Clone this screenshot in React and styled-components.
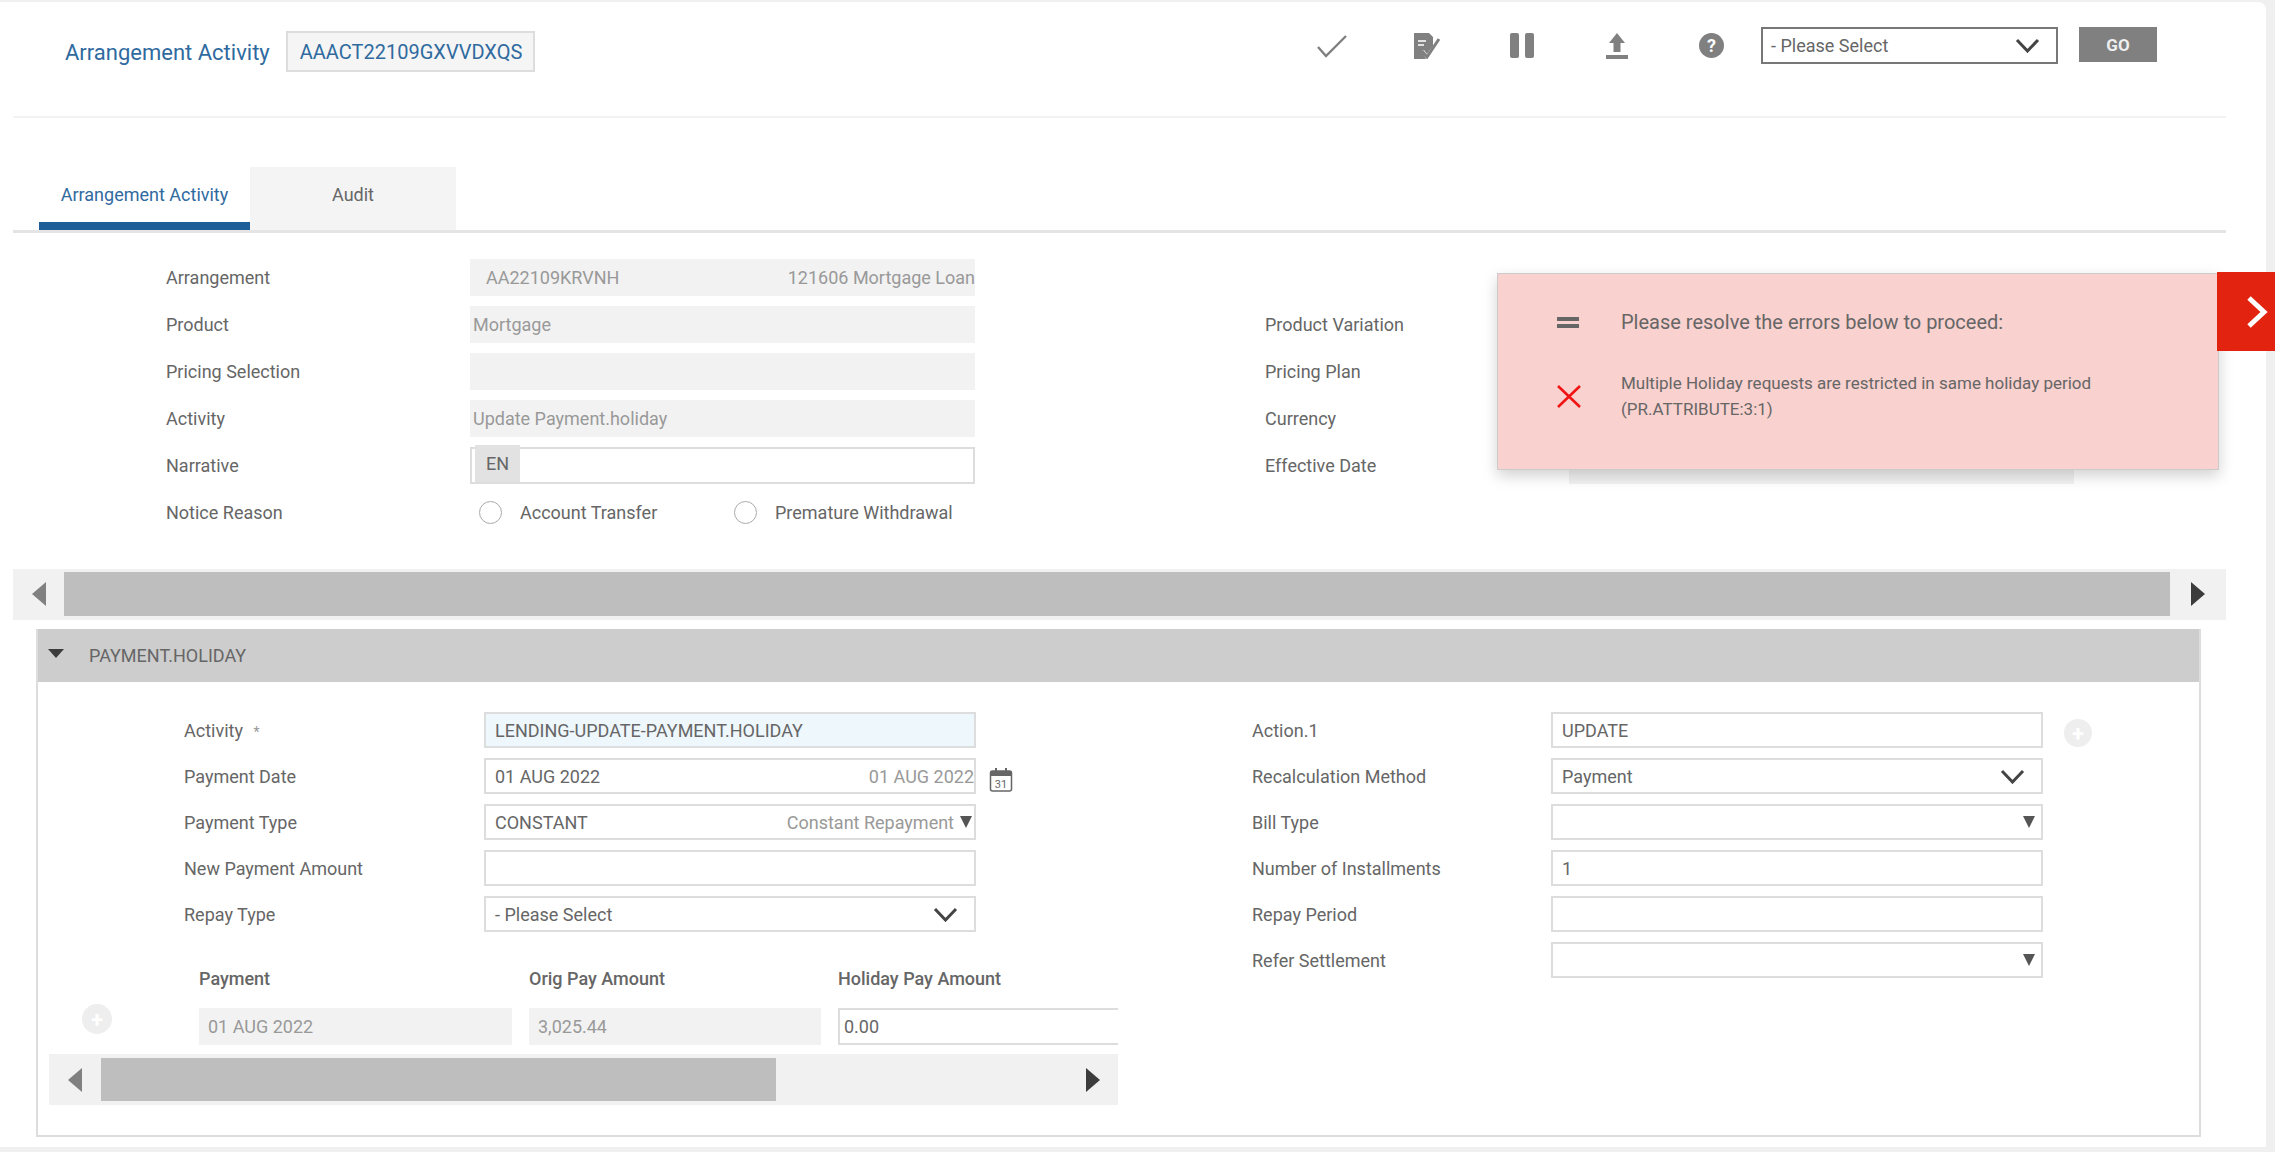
import React from "react"
import styled, { createGlobalStyle } from "styled-components"

const GlobalStyle = createGlobalStyle`
  html, body {
    margin: 0;
    padding: 0;
    background: #f0f0f0;
  }
  * {
    box-sizing: border-box;
  }
`

const Chevron = ({ size = 25 }) => (
  <svg width={size} height={size * 0.6} viewBox="0 0 25 15" fill="none">
    <polyline points="2,2 12.5,13 23,2" stroke="#444" strokeWidth="3" />
  </svg>
)

const App = () => {
  return (
    <Page>
      <GlobalStyle />
      <Panel>
        <Header>
          <Title>Arrangement Activity</Title>
          <IdPill>AAACT22109GXVVDXQS</IdPill>
          <Toolbar>
            <IconCell>
              <svg width="32" height="24" viewBox="0 0 32 24" fill="none">
                <polyline points="2,13 10,22 30,2" stroke="#808080" strokeWidth="2.4" />
              </svg>
            </IconCell>
            <IconCell>
              <svg width="28" height="27" viewBox="0 0 28 27" fill="none">
                <path d="M1 1h15l4 4v9l-6 8-3-4-2 1 4 8H1z" fill="#808080" />
                <path d="M5 9h8M5 13h6" stroke="#fff" strokeWidth="1.6" />
                <polyline points="9,19 14,25 26,7" stroke="#808080" strokeWidth="3" />
              </svg>
            </IconCell>
            <IconCell>
              <PauseBar />
              <PauseBar />
            </IconCell>
            <IconCell>
              <svg width="22" height="26" viewBox="0 0 22 26" fill="none">
                <path d="M11 0l8 10h-4.500v9h-7v-9H3z" fill="#808080" />
                <rect x="0" y="22" width="22" height="4" fill="#808080" />
              </svg>
            </IconCell>
            <IconCell>
              <HelpCircle>?</HelpCircle>
            </IconCell>
            <TopSelect>
              <span>- Please Select</span>
              <Chevron />
            </TopSelect>
            <GoButton>GO</GoButton>
          </Toolbar>
        </Header>

        <Tabs>
          <Tab $active>Arrangement Activity</Tab>
          <Tab>Audit</Tab>
        </Tabs>

        <Summary>
          <Column>
            <Row>
              <Label>Arrangement</Label>
              <ReadOnly $between $inset>
                <span>AA22109KRVNH</span>
                <span>121606 Mortgage Loan</span>
              </ReadOnly>
            </Row>
            <Row>
              <Label>Product</Label>
              <ReadOnly>Mortgage</ReadOnly>
            </Row>
            <Row>
              <Label>Pricing Selection</Label>
              <ReadOnly />
            </Row>
            <Row>
              <Label>Activity</Label>
              <ReadOnly>Update Payment.holiday</ReadOnly>
            </Row>
            <Row>
              <Label>Narrative</Label>
              <NarrativeBox>
                <LangTag>EN</LangTag>
              </NarrativeBox>
            </Row>
            <Row>
              <Label>Notice Reason</Label>
              <RadioGroup>
                <Radio />
                <RadioText $width="214px">Account Transfer</RadioText>
                <Radio />
                <RadioText>Premature Withdrawal</RadioText>
              </RadioGroup>
            </Row>
          </Column>
          <RightColumn>
            <Row>
              <Label>Product Variation</Label>
              <ReadOnly />
            </Row>
            <Row>
              <Label>Pricing Plan</Label>
              <ReadOnly />
            </Row>
            <Row>
              <Label>Currency</Label>
              <ReadOnly />
            </Row>
            <Row>
              <Label>Effective Date</Label>
              <ReadOnly />
            </Row>
          </RightColumn>
        </Summary>

        <ScrollTrack>
          <ScrollButton $width="51px">
            <ArrowLeft />
          </ScrollButton>
          <ScrollThumb $fill />
          <ScrollButton $width="56px">
            <ArrowRight />
          </ScrollButton>
        </ScrollTrack>

        <Section>
          <SectionHeader>
            <Caret />
            PAYMENT.HOLIDAY
          </SectionHeader>
          <SectionBody>
            <FormLeft>
              <FieldRow>
                <FieldLabel>
                  Activity <Required>*</Required>
                </FieldLabel>
                <Field $focus>LENDING-UPDATE-PAYMENT.HOLIDAY</Field>
              </FieldRow>
              <FieldRow>
                <FieldLabel>Payment Date</FieldLabel>
                <Field>
                  <span>01 AUG 2022</span>
                  <Hint>01 AUG 2022</Hint>
                </Field>
                <CalendarSlot>
                  <svg width="24" height="25" viewBox="0 0 24 25" fill="none">
                    <rect x="1.500" y="4" width="21" height="20" rx="2" stroke="#666" strokeWidth="1.5" />
                    <rect x="1.500" y="4" width="21" height="5" fill="#666" />
                    <path d="M7 1v5M17 1v5" stroke="#666" strokeWidth="2" />
                    <text x="12" y="21" fontSize="11" textAnchor="middle" fill="#666" fontFamily="Roboto, sans-serif">31</text>
                  </svg>
                </CalendarSlot>
              </FieldRow>
              <FieldRow>
                <FieldLabel>Payment Type</FieldLabel>
                <Field>
                  <span>CONSTANT</span>
                  <Hint>
                    Constant Repayment <SmallCaret />
                  </Hint>
                </Field>
              </FieldRow>
              <FieldRow>
                <FieldLabel>New Payment Amount</FieldLabel>
                <Field />
              </FieldRow>
              <FieldRow>
                <FieldLabel>Repay Type</FieldLabel>
                <Field>
                  <span>- Please Select</span>
                  <Chevron />
                </Field>
              </FieldRow>

              <SubTable>
                <SubHeader />
                <SubHeader>Payment</SubHeader>
                <SubHeader>Orig Pay Amount</SubHeader>
                <SubHeader>Holiday Pay Amount</SubHeader>
                <AddSlot>
                  <AddButton>+</AddButton>
                </AddSlot>
                <SubCell>01 AUG 2022</SubCell>
                <SubCell>3,025.44</SubCell>
                <SubInput>0.00</SubInput>
              </SubTable>
              <SubScroll>
                <ScrollButton $width="52px">
                  <ArrowLeft />
                </ScrollButton>
                <ScrollThumb $width="675px" />
                <ScrollButton $end>
                  <ArrowRight />
                </ScrollButton>
              </SubScroll>
            </FormLeft>

            <FormRight>
              <FieldRow>
                <RightLabel>Action.1</RightLabel>
                <Field>UPDATE</Field>
                <InlineAdd>+</InlineAdd>
              </FieldRow>
              <FieldRow>
                <RightLabel>Recalculation Method</RightLabel>
                <Field>
                  <span>Payment</span>
                  <Chevron />
                </Field>
              </FieldRow>
              <FieldRow>
                <RightLabel>Bill Type</RightLabel>
                <Field $end>
                  <SmallCaret />
                </Field>
              </FieldRow>
              <FieldRow>
                <RightLabel>Number of Installments</RightLabel>
                <Field>1</Field>
              </FieldRow>
              <FieldRow>
                <RightLabel>Repay Period</RightLabel>
                <Field />
              </FieldRow>
              <FieldRow>
                <RightLabel>Refer Settlement</RightLabel>
                <Field $end>
                  <SmallCaret />
                </Field>
              </FieldRow>
            </FormRight>
          </SectionBody>
        </Section>
      </Panel>

      <ErrorPanel>
        <ErrorRow>
          <ErrorIcon>
            <svg width="22" height="11" viewBox="0 0 22 11">
              <rect width="22" height="4" fill="#666" />
              <rect y="7" width="22" height="4" fill="#666" />
            </svg>
          </ErrorIcon>
          <ErrorTitle>Please resolve the errors below to proceed:</ErrorTitle>
        </ErrorRow>
        <ErrorRow>
          <ErrorIcon>
            <svg width="24" height="23" viewBox="0 0 24 23" fill="none">
              <path d="M1 1l22 21M23 1L1 22" stroke="#f01414" strokeWidth="2.600" />
            </svg>
          </ErrorIcon>
          <ErrorText>
            Multiple Holiday requests are restricted in same holiday period
            <br />
            (PR.ATTRIBUTE:3:1)
          </ErrorText>
        </ErrorRow>
      </ErrorPanel>
      <ErrorToggle>
        <svg width="22" height="32" viewBox="0 0 22 32" fill="none">
          <polyline points="3,2 18,16 3,30" stroke="#fff" strokeWidth="5" />
        </svg>
      </ErrorToggle>
    </Page>
  )
}

export default App

const Page = styled.div`
  position: relative;
  width: 2275px;
  height: 1152px;
  overflow: hidden;
  padding: 2px 9px 5px 0;
  background: #f0f0f0;
  font-family: Roboto, "Liberation Sans", sans-serif;
  font-size: 18px;
  color: #666;
`

const Panel = styled.div`
  height: 100%;
  padding: 0 40px 0 13px;
  background: #fff;
  border-top-right-radius: 8px;
`

const Header = styled.div`
  display: flex;
  align-items: flex-start;
  height: 116px;
  padding: 29px 69px 0 52px;
  border-bottom: 2px solid #f3f3f3;
`

const Title = styled.div`
  margin-top: 9px;
  font-size: 22px;
  color: #2f6a9f;
`

const IdPill = styled.div`
  margin-left: 16px;
  padding: 7px 12px 0;
  width: 249px;
  height: 41px;
  font-size: 20px;
  white-space: nowrap;
  color: #2f6a9f;
  background: #f5f5f5;
  border: 2px solid #ddd;
`

const Toolbar = styled.div`
  display: flex;
  align-items: center;
  margin: -4px 0 0 auto;
`

const IconCell = styled.div`
  display: flex;
  align-items: center;
  justify-content: center;
  gap: 6px;
  width: 95px;
  height: 37px;
`

const PauseBar = styled.span`
  width: 9px;
  height: 25px;
  border-radius: 2px;
  background: #808080;
`

const HelpCircle = styled.span`
  display: flex;
  align-items: center;
  justify-content: center;
  width: 25px;
  height: 25px;
  border-radius: 50%;
  font-size: 18px;
  font-weight: 700;
  color: #fff;
  background: #808080;
`

const TopSelect = styled.div`
  display: flex;
  align-items: center;
  justify-content: space-between;
  width: 297px;
  height: 37px;
  margin-left: 2px;
  padding: 0 16px 0 8px;
  font-size: 18px;
  border: 2px solid #777;
`

const GoButton = styled.div`
  display: flex;
  align-items: center;
  justify-content: center;
  width: 78px;
  height: 35px;
  margin: 0 0 2px 21px;
  font-size: 17px;
  font-weight: 700;
  color: #eee;
  background: #808080;
`

const Tabs = styled.div`
  display: flex;
  height: 67px;
  margin-top: 49px;
  padding-left: 26px;
  border-bottom: 3px solid #e4e4e4;
  height: 66px;
`

const Tab = styled.div`
  display: flex;
  align-items: center;
  justify-content: center;
  width: ${(p) => (p.$active ? "211px" : "206px")};
  padding-bottom: ${(p) => (p.$active ? "0" : "8px")};
  font-size: 18px;
  color: ${(p) => (p.$active ? "#2f6a9f" : "#666")};
  background: ${(p) => (p.$active ? "#fff" : "#f4f4f4")};
  border-bottom: ${(p) => (p.$active ? "8px solid #1f5f99" : "none")};
`

const Summary = styled.div`
  display: grid;
  grid-template-columns: 1086px 1fr;
  padding: 26px 0 38px 153px;
`

const Column = styled.div`
  display: flex;
  flex-direction: column;
  gap: 10px;
`

const RightColumn = styled(Column)`
  padding-top: 47px;
  padding-left: 153px;
  margin-left: -140px;
`

const Row = styled.div`
  display: flex;
  align-items: center;
  height: 37px;
`

const Label = styled.div`
  flex: 0 0 304px;
  white-space: nowrap;
`

const ReadOnly = styled.div`
  display: flex;
  align-items: center;
  justify-content: ${(p) => (p.$between ? "space-between" : "flex-start")};
  width: 505px;
  height: 37px;
  padding: 0 ${(p) => (p.$inset ? "0 0 16px" : "0 0 3px")};
  white-space: nowrap;
  color: #999;
  background: #f2f2f2;
`

const NarrativeBox = styled.div`
  display: flex;
  width: 505px;
  height: 37px;
  padding-left: 3px;
  background: #fff;
  border: 2px solid #ddd;
`

const LangTag = styled.div`
  display: flex;
  align-items: center;
  justify-content: center;
  width: 45px;
  height: 37px;
  margin-top: -4px;
  background: #e2e2e2;
`

const RadioGroup = styled.div`
  display: flex;
  align-items: center;
  padding-left: 9px;
  white-space: nowrap;
`

const Radio = styled.span`
  flex: none;
  width: 23px;
  height: 23px;
  border-radius: 50%;
  background: #fff;
  border: 1.5px solid #aaa;
`

const RadioText = styled.span`
  width: ${(p) => p.$width || "auto"};
  margin-left: 18px;
`

const ScrollTrack = styled.div`
  display: flex;
  align-items: stretch;
  height: 51px;
  padding: 3px 0 4px;
  background: #f1f1f1;
`

const ScrollButton = styled.div`
  display: flex;
  align-items: center;
  justify-content: ${(p) => (p.$end ? "flex-end" : "center")};
  flex: ${(p) => (p.$width ? `0 0 ${p.$width}` : "1")};
  padding-right: ${(p) => (p.$end ? "18px" : "0")};
`

const ScrollThumb = styled.div`
  flex: ${(p) => (p.$fill ? "1" : `0 0 ${p.$width}`)};
  background: #bebebe;
`

const ArrowLeft = styled.span`
  border-style: solid;
  border-width: 12px 14px 12px 0;
  border-color: transparent #808080 transparent transparent;
`

const ArrowRight = styled.span`
  border-style: solid;
  border-width: 12px 0 12px 14px;
  border-color: transparent transparent transparent #3c3c3c;
`

const Section = styled.div`
  height: 508px;
  margin: 9px 25px 0 23px;
  background: #fff;
  border: 2px solid #ddd;
  border-top: none;
`

const SectionHeader = styled.div`
  display: flex;
  align-items: center;
  height: 53px;
  padding-left: 10px;
  color: #666;
  background: #cdcdcd;
`

const Caret = styled.span`
  margin-right: 25px;
  margin-top: -5px;
  border-style: solid;
  border-width: 9px 8px 0;
  border-color: #3c3c3c transparent transparent;
`

const SectionBody = styled.div`
  display: grid;
  grid-template-columns: 1214px 1fr;
  padding-top: 30px;
`

const FormLeft = styled.div`
  display: flex;
  flex-direction: column;
  gap: 10px;
  padding-left: 146px;
`

const FormRight = styled.div`
  display: flex;
  flex-direction: column;
  gap: 10px;
`

const FieldRow = styled.div`
  display: flex;
  align-items: center;
  height: 36px;
`

const FieldLabel = styled.div`
  flex: 0 0 300px;
  white-space: nowrap;
`

const RightLabel = styled(FieldLabel)`
  flex-basis: 299px;
`

const Required = styled.span`
  margin-left: 6px;
  font-size: 14px;
  color: #999;
`

const Field = styled.div`
  display: flex;
  align-items: center;
  justify-content: ${(p) => (p.$end ? "flex-end" : "space-between")};
  flex: 0 0 492px;
  height: 36px;
  padding: 0 ${(p) => (p.$end ? "4px" : "0")} 0 9px;
  padding-right: 4px;
  white-space: nowrap;
  background: ${(p) => (p.$focus ? "#eef7fb" : "#fff")};
  border: 2px solid #ddd;

  svg {
    margin-right: 12px;
  }
`

const Hint = styled.span`
  display: flex;
  align-items: center;
  gap: 4px;
  margin-right: -4px;
  color: #999;
`

const SmallCaret = styled.span`
  margin: 0 2px;
  border-style: solid;
  border-width: 12px 6px 0;
  border-color: #555 transparent transparent;
`

const CalendarSlot = styled.div`
  display: flex;
  margin: 6px 0 0 13px;
`

const InlineAdd = styled.span`
  display: flex;
  align-items: center;
  justify-content: center;
  flex: none;
  width: 28px;
  height: 28px;
  margin: 6px 0 0 21px;
  border-radius: 50%;
  font-size: 22px;
  font-weight: 700;
  color: #fff;
  background: #eee;
`

const SubTable = styled.div`
  display: grid;
  grid-template-columns: 133px 313px 292px 296px;
  grid-template-rows: 22px 37px;
  column-gap: 17px;
  row-gap: 18px;
  width: 1069px;
  margin: 26px 0 -1px -135px;
  overflow: hidden;
`

const SubHeader = styled.div`
  font-weight: 500;
  white-space: nowrap;
  color: #666;
`

const AddSlot = styled.div`
  display: flex;
  justify-content: center;
  align-items: flex-start;
  margin: -4px 0 0 -37px;
`

const AddButton = styled(InlineAdd)`
  width: 30px;
  height: 30px;
  margin: 0;
`

const SubCell = styled.div`
  display: flex;
  align-items: center;
  padding-left: 9px;
  color: #999;
  background: #f2f2f2;
`

const SubInput = styled.div`
  display: flex;
  align-items: center;
  padding-left: 4px;
  border: 2px solid #ddd;
  border-right: none;
`

const SubScroll = styled(ScrollTrack)`
  width: 1069px;
  margin-left: -135px;
  padding: 4px 0;
`

const ErrorPanel = styled.div`
  position: absolute;
  top: 273px;
  left: 1497px;
  display: flex;
  flex-direction: column;
  gap: 36px;
  width: 722px;
  height: 197px;
  padding: 36px 0 0 59px;
  background: #f9d1ce;
  border: 1px solid #ccc;
  box-shadow: 0 6px 14px rgba(0, 0, 0, 0.18);
`

const ErrorRow = styled.div`
  display: flex;
  align-items: center;
`

const ErrorIcon = styled.div`
  display: flex;
  flex: 0 0 64px;
`

const ErrorTitle = styled.div`
  font-size: 20px;
  color: #666;
`

const ErrorText = styled.div`
  font-size: 17px;
  line-height: 26px;
  color: #666;
`

const ErrorToggle = styled.div`
  position: absolute;
  top: 272px;
  left: 2217px;
  display: flex;
  align-items: center;
  justify-content: flex-end;
  width: 58px;
  height: 79px;
  padding-right: 7px;
  background: #e1230f;
`
